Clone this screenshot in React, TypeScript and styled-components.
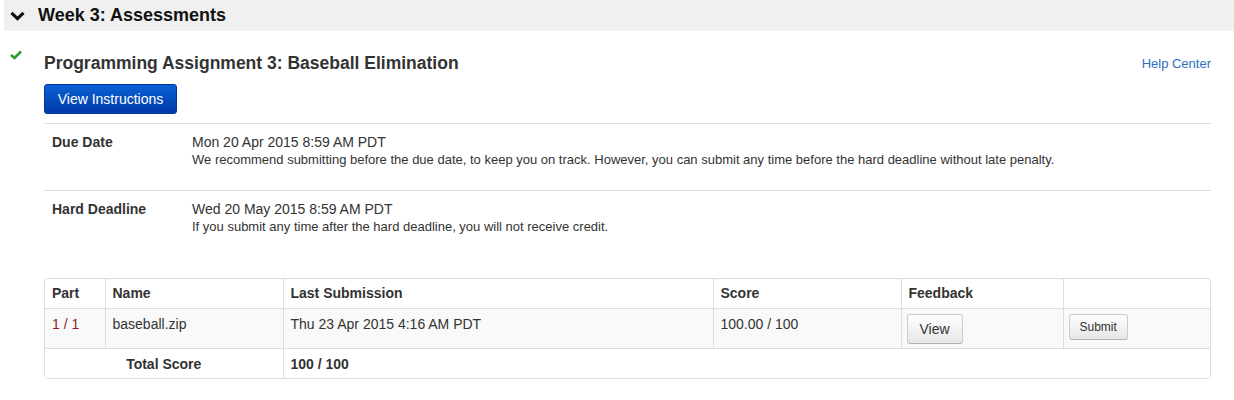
import React from "react"
import styled, { createGlobalStyle } from "styled-components"

const Global = createGlobalStyle`
  body {
    margin: 0;
    background: #fff;
    font-family: "Liberation Sans", Arial, sans-serif;
    color: #333;
  }
`

const Page = styled.div`
  padding-left: 4px;
`

const WeekBar = styled.div`
  height: 31px;
  background: #f0f0f0;
  display: flex;
  align-items: center;
  gap: 13px;
  padding-left: 6px;
  font-size: 18px;
  font-weight: bold;
  color: #111;
`

const Section = styled.div`
  display: grid;
  grid-template-columns: 40px 1fr;
  padding: 20px 23px 0 0;
`

const Check = styled.div`
  padding: 0 0 0 6px;
  margin-top: -5px;
`

const Body = styled.div`
  display: flex;
  flex-direction: column;
`

const TitleRow = styled.div`
  display: flex;
  justify-content: space-between;
  align-items: center;
  height: 24px;
`

const Title = styled.h2`
  margin: 0;
  font-size: 17.5px;
  font-weight: bold;
  color: #333;
`

const HelpLink = styled.a`
  font-size: 13px;
  color: #2a6fc0;
  text-decoration: none;
`

const PrimaryButton = styled.button`
  align-self: flex-start;
  margin-top: 9px;
  height: 30px;
  width: 133px;
  padding: 0;
  font-family: inherit;
  font-size: 14px;
  color: #fff;
  border: 1px solid #00359c;
  border-radius: 3px;
  background: linear-gradient(#0a62d4, #0039a8);
`

const InfoList = styled.div`
  margin-top: 9px;
  border-top: 1px solid #ddd;
`

const InfoRow = styled.div<{ $last?: boolean }>`
  display: grid;
  grid-template-columns: 140px 1fr;
  padding: 9px 8px 0;
  height: ${p => (p.$last ? 56 : 67)}px;
  box-sizing: border-box;
  border-bottom: ${p => (p.$last ? "none" : "1px solid #ddd")};
`

const InfoLabel = styled.div`
  font-size: 14px;
  font-weight: bold;
  line-height: 18px;
`

const InfoValue = styled.div`
  font-size: 14px;
  line-height: 18px;
`

const InfoNote = styled.div`
  font-size: 13px;
  line-height: 18px;
`

const TableWrap = styled.div`
  margin-top: 31px;
  border: 1px solid #ddd;
  border-radius: 4px;
  overflow: hidden;
`

const Table = styled.table`
  width: 100%;
  border-collapse: collapse;
  font-size: 14px;
  table-layout: fixed;
`

const Th = styled.th<{ $w?: number }>`
  box-sizing: border-box;
  width: ${p => (p.$w ? `${p.$w}px` : "auto")};
  text-align: left;
  font-weight: bold;
  height: 29px;
  padding: 0 7px;
  border-left: 1px solid #ddd;
  &:first-child {
    border-left: none;
  }
`

const Tr = styled.tr<{ $shade?: boolean }>`
  background: ${p => (p.$shade ? "#f9f9f9" : "#fff")};
  border-top: 1px solid #ddd;
`

const Td = styled.td<{ $bold?: boolean; $center?: boolean; $plain?: boolean }>`
  vertical-align: top;
  padding: 7px 7px 0;
  height: ${p => (p.$plain ? 30 : 40)}px;
  box-sizing: border-box;
  font-weight: ${p => (p.$bold ? "bold" : "normal")};
  text-align: ${p => (p.$center ? "center" : "left")};
  border-left: 1px solid #ddd;
  &:first-child {
    border-left: none;
  }
`

const PartNum = styled.span`
  color: #8b1d1d;
`

const GrayButton = styled.button<{ $small?: boolean }>`
  margin: -2px 0 0 -2px;
  height: ${p => (p.$small ? 26 : 30)}px;
  padding: 0 ${p => (p.$small ? 10 : 12)}px;
  font-family: inherit;
  font-size: ${p => (p.$small ? 12 : 14)}px;
  color: #333;
  border: 1px solid #ccc;
  border-bottom-color: #b3b3b3;
  border-radius: 3px;
  background: linear-gradient(#fff, #e6e6e6);
`

const Chevron = () => (
  <svg width="15" height="10" viewBox="0 0 15 10">
    <path d="M1.5 1.8 L7.5 7.6 L13.5 1.8" fill="none" stroke="#111" strokeWidth="3" />
  </svg>
)

const CheckMark = () => (
  <svg width="12" height="10" viewBox="0 0 12 10">
    <path d="M1 5 L4.5 8 L11 1.5" fill="none" stroke="#2e9b2e" strokeWidth="2.6" />
  </svg>
)

export default function App() {
  return (
    <Page>
      <Global />
      <WeekBar>
        <Chevron />
        Week 3: Assessments
      </WeekBar>
      <Section>
        <Check>
          <CheckMark />
        </Check>
        <Body>
          <TitleRow>
            <Title>Programming Assignment 3: Baseball Elimination</Title>
            <HelpLink href="#">Help Center</HelpLink>
          </TitleRow>
          <PrimaryButton>View Instructions</PrimaryButton>
          <InfoList>
            <InfoRow>
              <InfoLabel>Due Date</InfoLabel>
              <div>
                <InfoValue>Mon 20 Apr 2015 8:59 AM PDT</InfoValue>
                <InfoNote>
                  We recommend submitting before the due date, to keep you on track. However, you can submit any time
                  before the hard deadline without late penalty.
                </InfoNote>
              </div>
            </InfoRow>
            <InfoRow $last>
              <InfoLabel>Hard Deadline</InfoLabel>
              <div>
                <InfoValue>Wed 20 May 2015 8:59 AM PDT</InfoValue>
                <InfoNote>If you submit any time after the hard deadline, you will not receive credit.</InfoNote>
              </div>
            </InfoRow>
          </InfoList>
          <TableWrap>
            <Table>
              <thead>
                <tr>
                  <Th $w={60}>Part</Th>
                  <Th $w={178}>Name</Th>
                  <Th $w={430}>Last Submission</Th>
                  <Th $w={188}>Score</Th>
                  <Th $w={162}>Feedback</Th>
                  <Th />
                </tr>
              </thead>
              <tbody>
                <Tr $shade>
                  <Td>
                    <PartNum>1 / 1</PartNum>
                  </Td>
                  <Td>baseball.zip</Td>
                  <Td>Thu 23 Apr 2015 4:16 AM PDT</Td>
                  <Td>100.00 / 100</Td>
                  <Td>
                    <GrayButton>View</GrayButton>
                  </Td>
                  <Td>
                    <GrayButton $small>Submit</GrayButton>
                  </Td>
                </Tr>
                <Tr>
                  <Td colSpan={2} $bold $center $plain>
                    Total Score
                  </Td>
                  <Td colSpan={4} $bold $plain>
                    100 / 100
                  </Td>
                </Tr>
              </tbody>
            </Table>
          </TableWrap>
        </Body>
      </Section>
    </Page>
  )
}
